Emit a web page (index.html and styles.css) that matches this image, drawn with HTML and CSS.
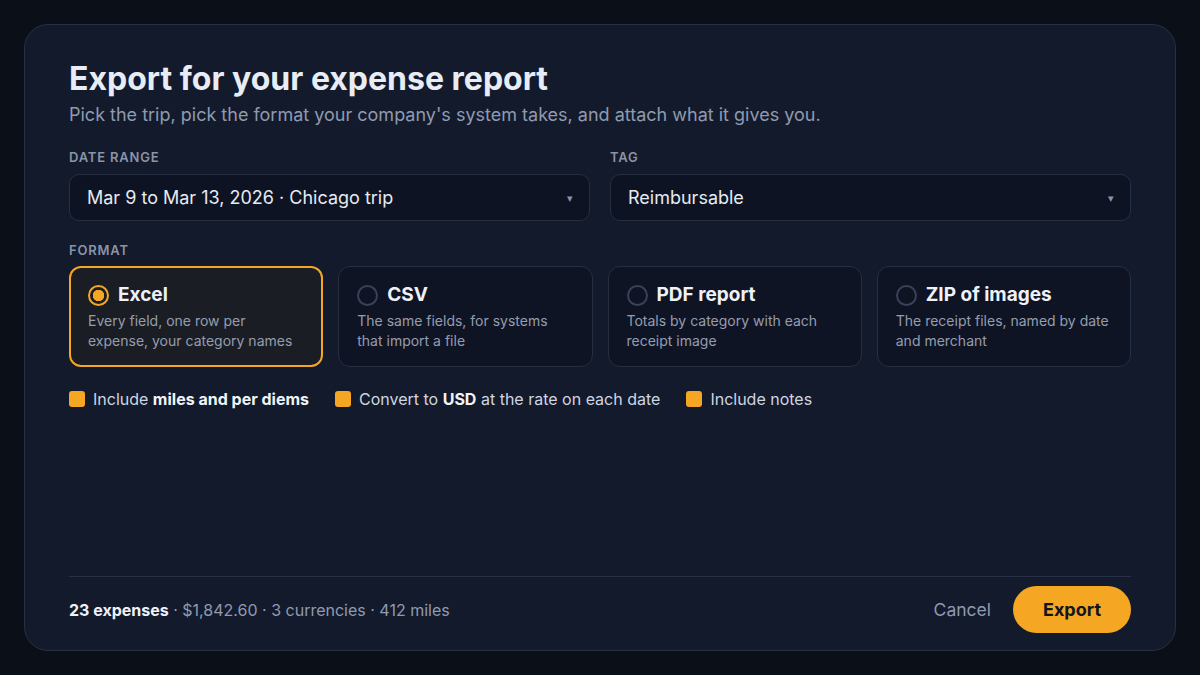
FILE: index.html
```html
<!DOCTYPE html>
<html lang="en">
<head>
<meta charset="utf-8">
<title>Export for your expense report</title>
<link rel="stylesheet" href="styles.css">
</head>
<body>
<main class="dialog">
  <h1 class="title">Export for your expense report</h1>
  <p class="subtitle">Pick the trip, pick the format your company's system takes, and attach what it gives you.</p>

  <div class="fields">
    <div class="field">
      <div class="label">DATE RANGE</div>
      <div class="select"><span>Mar 9 to Mar 13, 2026 · Chicago trip</span><span class="caret">▾</span></div>
    </div>
    <div class="field">
      <div class="label">TAG</div>
      <div class="select"><span>Reimbursable</span><span class="caret">▾</span></div>
    </div>
  </div>

  <div class="label format-label">FORMAT</div>
  <div class="formats">
    <div class="fmt selected">
      <div class="fmt-head"><span class="radio on"></span><span class="fmt-name">Excel</span></div>
      <div class="fmt-desc">Every field, one row per expense, your category names</div>
    </div>
    <div class="fmt">
      <div class="fmt-head"><span class="radio"></span><span class="fmt-name">CSV</span></div>
      <div class="fmt-desc">The same fields, for systems that import a file</div>
    </div>
    <div class="fmt">
      <div class="fmt-head"><span class="radio"></span><span class="fmt-name">PDF report</span></div>
      <div class="fmt-desc">Totals by category with each receipt image</div>
    </div>
    <div class="fmt">
      <div class="fmt-head"><span class="radio"></span><span class="fmt-name">ZIP of images</span></div>
      <div class="fmt-desc">The receipt files, named by date and merchant</div>
    </div>
  </div>

  <div class="options">
    <label class="opt"><span class="box"></span><span class="opt-text">Include <b>miles and per diems</b></span></label>
    <label class="opt"><span class="box"></span><span class="opt-text">Convert to <b>USD</b> at the rate on each date</span></label>
    <label class="opt"><span class="box"></span><span class="opt-text">Include notes</span></label>
  </div>

  <footer class="footer">
    <div class="summary"><b>23 expenses</b> · $1,842.60 · 3 currencies · 412 miles</div>
    <div class="actions">
      <span class="cancel">Cancel</span>
      <span class="export">Export</span>
    </div>
  </footer>
</main>
</body>
</html>
```

FILE: styles.css
```css
* { box-sizing: border-box; }
html, body { margin: 0; padding: 0; }
body {
  width: 1200px;
  height: 675px;
  background: #0b0f18;
  font-family: Inter, "Noto Sans", sans-serif;
  color: #e6eaf2;
  padding: 24px;
}
.dialog {
  height: 627px;
  background: #131a2b;
  border: 1px solid #272f43;
  border-radius: 24px;
  padding: 34px 44px 17px;
  display: flex;
  flex-direction: column;
}
.title {
  margin: 0;
  font-size: 32px;
  line-height: 40px;
  font-weight: 700;
  color: #e8ecf4;
}
.subtitle {
  margin: 4px 0 0;
  font-size: 18px;
  line-height: 24px;
  color: #8f9ab0;
}
.fields {
  display: grid;
  grid-template-columns: 1fr 1fr;
  gap: 20px;
  margin-top: 22px;
}
.label {
  font-size: 13px;
  font-weight: 600;
  letter-spacing: 0.8px;
  color: #8a94a8;
  line-height: 16px;
}
.select {
  margin-top: 9px;
  height: 47px;
  border: 1px solid #262e42;
  border-radius: 10px;
  background: #0e1323;
  display: flex;
  align-items: center;
  justify-content: space-between;
  padding: 0 16px 0 17px;
  font-size: 18px;
  color: #e6eaf2;
}
.caret {
  font-size: 11px;
  color: #8a94a8;
}
.format-label { margin-top: 21px; }
.formats {
  margin-top: 8px;
  display: grid;
  grid-template-columns: repeat(4, 1fr);
  gap: 15px;
}
.fmt {
  height: 101px;
  border: 1px solid #262e42;
  border-radius: 12px;
  background: #0f1424;
  padding: 16px 18px;
}
.fmt.selected {
  border: 2px solid #f5a623;
  background: #1b1d24;
  padding: 15px 17px;
}
.fmt-head {
  display: flex;
  align-items: center;
  gap: 9px;
}
.radio {
  width: 21px;
  height: 21px;
  border-radius: 50%;
  border: 2px solid #3a4258;
  flex: none;
}
.radio.on {
  border-color: #f5a623;
  background: radial-gradient(circle, #f5a623 0 5.5px, transparent 6px);
}
.fmt-name {
  font-size: 19px;
  font-weight: 700;
  color: #eef1f7;
  line-height: 24px;
}
.fmt-desc {
  margin-top: 4px;
  font-size: 14px;
  line-height: 20px;
  color: #949db0;
}
.options {
  margin-top: 22px;
  display: flex;
  gap: 26px;
}
.opt {
  display: flex;
  align-items: center;
  gap: 8px;
  font-size: 16px;
  color: #cfd5e1;
  line-height: 20px;
}
.opt b { color: #f1f3f8; font-weight: 700; }
.box {
  width: 16px;
  height: 16px;
  border-radius: 3px;
  background: #f5a623;
  flex: none;
}
.footer {
  margin-top: auto;
  border-top: 1px solid #283045;
  padding-top: 9px;
  display: flex;
  align-items: center;
  justify-content: space-between;
}
.summary {
  font-size: 16px;
  color: #8f9ab0;
}
.summary b { color: #eef1f7; font-weight: 700; }
.actions {
  display: flex;
  align-items: center;
  gap: 22px;
}
.cancel {
  font-size: 17.5px;
  color: #8f9ab0;
}
.export {
  height: 47px;
  width: 118px;
  border-radius: 24px;
  background: #f5a623;
  color: #121420;
  font-size: 18px;
  font-weight: 700;
  display: flex;
  align-items: center;
  justify-content: center;
}
```
